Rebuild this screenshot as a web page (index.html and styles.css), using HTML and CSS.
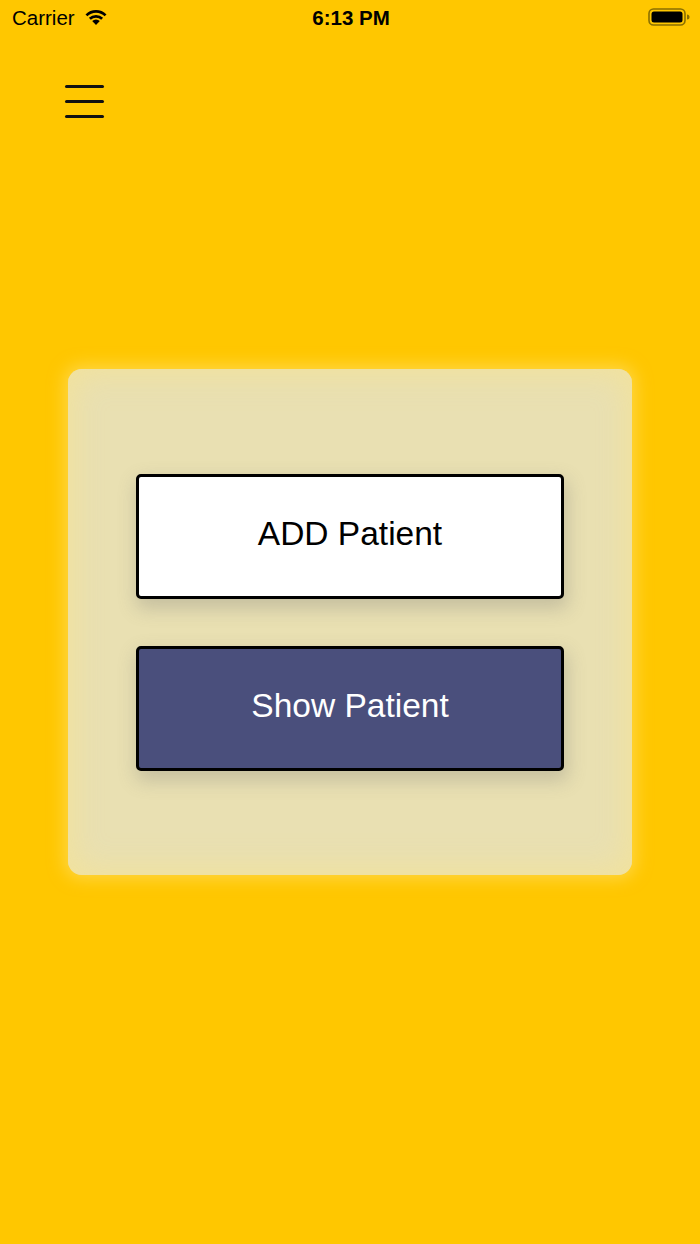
FILE: index.html
```html
<!DOCTYPE html>
<html>
<head>
<meta charset="utf-8">
<link rel="stylesheet" href="styles.css">
</head>
<body>
<div class="statusbar">
  <div class="sb-left">
    <span class="carrier">Carrier</span>
    <svg class="wifi" width="26" height="20" viewBox="0 0 26 20">
      <path d="M13 19 L9.2 15.1 A5.4 5.4 0 0 1 16.8 15.1 Z" fill="#000"/>
      <path d="M5.9 11.8 A10.2 10.2 0 0 1 20.1 11.8 L18.2 13.7 A7.6 7.6 0 0 0 7.8 13.7 Z" fill="#000"/>
      <path d="M2.5 8.4 A15 15 0 0 1 23.5 8.4 L21.6 10.3 A12.3 12.3 0 0 0 4.4 10.3 Z" fill="#000"/>
    </svg>
  </div>
  <div class="sb-time">6:13 PM</div>
  <div class="sb-right">
    <svg class="battery" width="42" height="20" viewBox="0 0 42 20">
      <rect x="1" y="2" width="36" height="16" rx="4.5" fill="none" stroke="#8a6f00" stroke-width="1.6"/>
      <rect x="3.5" y="4.5" width="31" height="11" rx="2.5" fill="#000"/>
      <path d="M39 7.5 a2.4 2.4 0 0 1 0 5 Z" fill="#8a6f00"/>
    </svg>
  </div>
</div>
<div class="header">
  <button class="menu" aria-label="Menu">
    <span></span><span></span><span></span>
  </button>
</div>
<main class="content">
  <div class="card">
    <button class="btn btn-add">ADD Patient</button>
    <button class="btn btn-show">Show Patient</button>
  </div>
</main>
</body>
</html>
```
FILE: styles.css
```css
html, body {
  margin: 0;
  padding: 0;
}
body {
  width: 700px;
  height: 1244px;
  background: #ffc700;
  font-family: "Liberation Sans", Arial, sans-serif;
  color: #000;
  overflow: hidden;
}
.statusbar {
  height: 36px;
  display: grid;
  grid-template-columns: 1fr auto 1fr;
  align-items: center;
  padding: 0 10px 0 12px;
}
.sb-left {
  display: flex;
  align-items: center;
  gap: 8px;
}
.carrier {
  font-size: 20.5px;
}
.wifi {
  margin-top: -4px;
}
.sb-time {
  font-size: 20.5px;
  font-weight: bold;
  text-align: center;
}
.sb-right {
  display: flex;
  justify-content: flex-end;
  margin-top: -2px;
}
.header {
  padding: 49px 0 0 65px;
}
.menu {
  display: flex;
  flex-direction: column;
  gap: 12px;
  width: 40px;
  padding: 0;
  border: 0;
  background: none;
}
.menu span {
  display: block;
  height: 3px;
  width: 39px;
  border-radius: 2px;
  background: #111;
}
.content {
  padding: 251px 68px 0 68px;
}
.card {
  height: 506px;
  box-sizing: border-box;
  background: #e9e0b2;
  border-radius: 14px;
  padding: 105px 68px 0 68px;
  display: flex;
  flex-direction: column;
  gap: 47px;
  box-shadow: 0 0 16px 4px rgba(255, 226, 120, 0.55), inset 0 0 30px 6px rgba(244, 226, 150, 0.8);
}
.btn {
  height: 125px;
  width: 100%;
  border: 3px solid #000;
  border-radius: 5px;
  font-family: "Liberation Sans", Arial, sans-serif;
  font-size: 33.5px;
  box-shadow: 2px 8px 18px 2px rgba(120, 120, 120, 0.3);
  padding: 0 0 5px 0;
}
.btn-add {
  background: #fff;
  color: #000;
}
.btn-show {
  background: #4a4f7c;
  color: #fff;
}
```
